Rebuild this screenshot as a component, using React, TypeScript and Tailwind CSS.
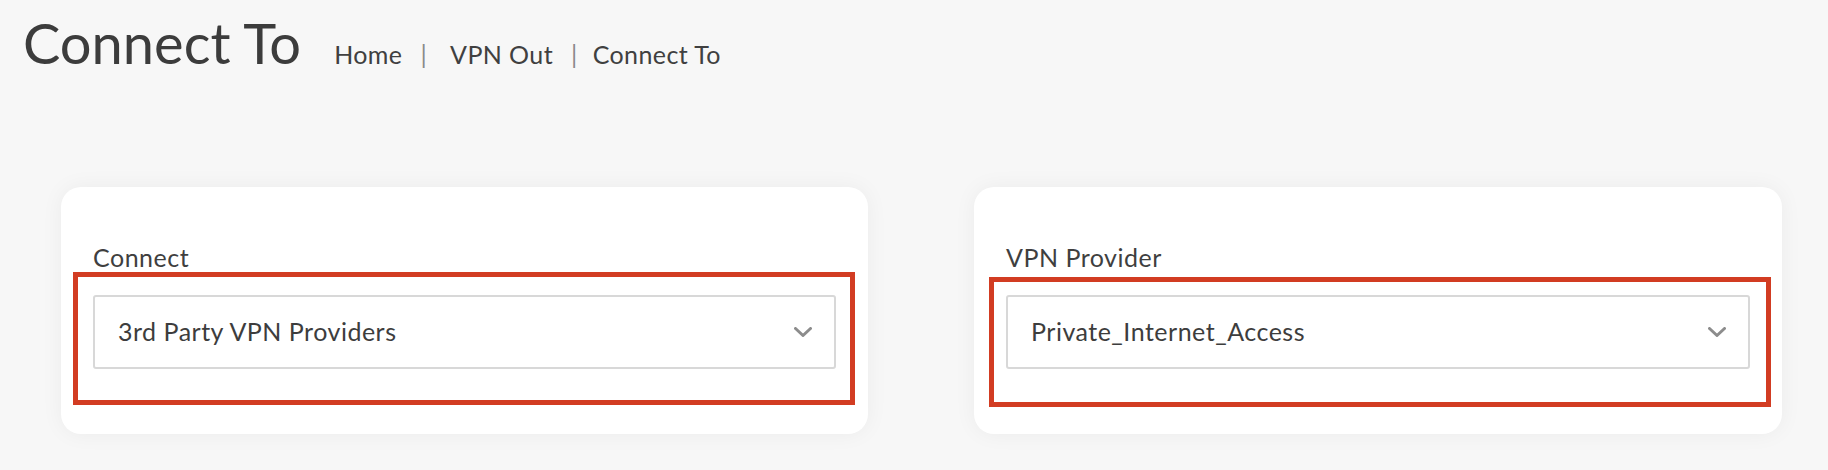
import React from "react";

function Chevron() {
  return (
    <svg width="18" height="10" viewBox="0 0 18 10" fill="none" className="shrink-0">
      <polyline points="1.5,1.5 9,8.5 16.5,1.5" stroke="#8c8c8c" strokeWidth="3" strokeLinecap="round" strokeLinejoin="round" />
    </svg>
  );
}

function SelectCard({
  label,
  value,
  width,
  box,
}: {
  label: string;
  value: string;
  width: string;
  box: string;
}) {
  return (
    <div className={`${width} bg-white rounded-[20px] shadow-[0_0_22px_rgba(0,0,0,0.05)] px-[32px] pt-[52px] pb-[65px]`}>
      <div className="text-[25px] leading-[36px] text-[#3f3f3f] tracking-[0.5px]">{label}</div>
      <div className="relative mt-[20px]">
        <div className={`absolute border-[5px] border-[#d23c22] ${box}`} />
        <div className="relative h-[74px] border-2 border-[#d8d8d8] rounded-[3px] bg-white flex items-center justify-between pl-[23px] pr-[22px]">
          <span className="text-[25px] text-[#3d3d3d] tracking-[0.5px]">{value}</span>
          <Chevron />
        </div>
      </div>
    </div>
  );
}

export default function App() {
  return (
    <div
      className="w-full h-[470px] bg-[#f7f7f7] overflow-hidden"
      style={{ fontFamily: "Lato, 'Open Sans', sans-serif" }}
    >
      <div className="flex items-baseline pl-[23px] pt-[9px]">
        <h1 className="text-[56px] leading-[67px] text-[#3c3c3c] font-normal">Connect To</h1>
        <nav className="flex items-baseline ml-[33px] text-[25px] text-[#404040] tracking-[0.4px]">
          <span>Home</span>
          <span className="ml-[18px] mr-[23px] text-[#8a8a8a]">|</span>
          <span>VPN Out</span>
          <span className="ml-[18px] mr-[15px] text-[#8a8a8a]">|</span>
          <span>Connect To</span>
        </nav>
      </div>
      <div className="flex gap-[106px] pl-[61px] mt-[111px]">
        <SelectCard
          label="Connect"
          value="3rd Party VPN Providers"
          width="w-[807px]"
          box="left-[-20px] right-[-19px] top-[-23px] bottom-[-36px]"
        />
        <SelectCard
          label="VPN Provider"
          value="Private_Internet_Access"
          width="w-[808px]"
          box="left-[-17px] right-[-21px] top-[-18px] bottom-[-38px]"
        />
      </div>
    </div>
  );
}
